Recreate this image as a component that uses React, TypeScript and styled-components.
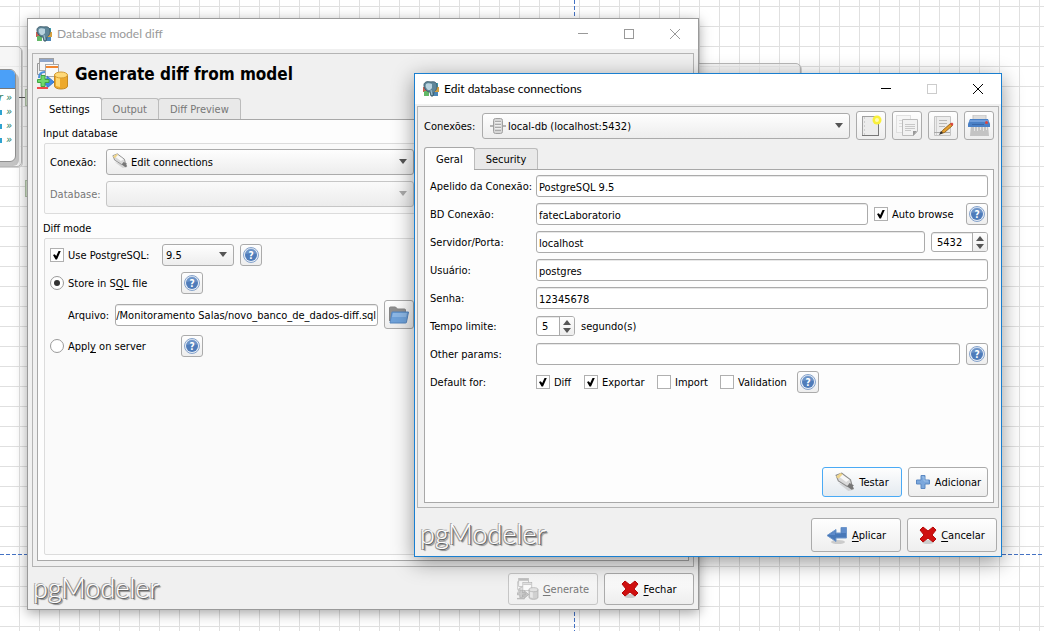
import React from "react";
import styled, { createGlobalStyle, css } from "styled-components";

const UI_FONT = '"DejaVu Sans Condensed", "DejaVu Sans", sans-serif';

const GlobalStyle = createGlobalStyle`
  *, *::before, *::after { box-sizing: border-box; }
  body {
    margin: 0;
    background: #fff;
    color: #000;
    font-family: ${UI_FONT};
    font-size: 11px;
    line-height: 16px;
  }
  button, input, select { font: inherit; color: inherit; margin: 0; }
  h1, h2 { margin: 0; font-weight: normal; font-size: inherit; }
  u { text-underline-offset: 2px; }
`;

/* ---------- model canvas ---------- */

const Canvas = styled.div`
  position: relative;
  min-height: 100vh;
  overflow: hidden;
  background-image: linear-gradient(to right, transparent 19px, #e0e0e0 19px),
    linear-gradient(to bottom, transparent 19px, #e0e0e0 19px);
  background-size: 20px 20px;
  background-position: 0 0, 0 7px;
`;

const PageBreak = styled.div<{ $vertical?: boolean }>`
  position: absolute;
  ${(p) =>
    p.$vertical
      ? css`
          top: 0; bottom: 0; left: 574px; width: 1px;
          background: repeating-linear-gradient(to bottom, #4472c4 0 4px, transparent 4px 6px);
        `
      : css`
          left: 0; right: 0; top: 554px; height: 1px;
          background: repeating-linear-gradient(to right, #4472c4 0 4px, transparent 4px 6px);
        `}
`;

const Schema = styled.div<{ $x: number; $y: number; $w: number; $h: number }>`
  position: absolute;
  left: ${(p) => p.$x}px;
  top: ${(p) => p.$y}px;
  width: ${(p) => p.$w}px;
  height: ${(p) => p.$h}px;
  border: 1px solid #b8b8b8;
  border-radius: 5px;
  background: rgba(240, 240, 240, 0.6);
  box-shadow: 1px 1px 0 #d4d4d4;
`;

const ModelTable = styled.div`
  position: absolute;
  left: -80px;
  top: 69px;
  width: 96px;
  height: 93px;
  border: 1px solid #8f8f8f;
  border-radius: 6px;
  background: #fff;
  box-shadow: 3px 4px 0 #c4c4c4;
  overflow: hidden;
`;

const ModelHeader = styled.div`
  height: 19px;
  margin-bottom: 2px;
  background: #4ba0f8;
  border-bottom: 1px solid #777;
`;

const ModelColumn = styled.div`
  display: flex;
  align-items: center;
  justify-content: flex-end;
  gap: 4px;
  height: 14px;
  padding-right: 3px;
  font: italic 11px/14px ${UI_FONT};
  color: #1c7a5e;
`;

const ColumnType = styled.span`
  width: 2px;
  height: 5px;
  background: #2fa3d0;
`;

const Link = styled.div`
  position: absolute;
  left: 16px;
  top: 97px;
  width: 11px;
  height: 1px;
  background: #555;
`;

const LinkTag = styled.div<{ $y: number }>`
  position: absolute;
  left: 25px;
  top: ${(p) => p.$y}px;
  width: 8px;
  height: 17px;
  border: 1px solid #b4c6ab;
  background: #d9ead0;
`;

/* ---------- windows ---------- */

const Win = styled.section<{ $active?: boolean }>`
  position: absolute;
  display: flex;
  flex-direction: column;
  background: #f0f0f0;
  ${(p) =>
    p.$active
      ? css`
          left: 414px; right: 42px; top: 73px; bottom: 74px;
          border: 1px solid #1a7fd0;
          box-shadow: 0 5px 20px rgba(0, 0, 0, 0.42);
        `
      : css`
          left: 27px; right: 345px; top: 18px; bottom: 21px;
          border: 1px solid #9a9a9a;
          box-shadow: 0 3px 12px rgba(0, 0, 0, 0.36);
        `}
`;

const TitleBar = styled.header<{ $active?: boolean }>`
  display: flex;
  align-items: center;
  flex: none;
  height: 30px;
  padding-left: 8px;
  gap: 5px;
  background: #fff;
  color: ${(p) => (p.$active ? "#000" : "#999")};
  font: 12px/16px Lato, "Open Sans", sans-serif;
`;

const Title = styled.h1`
  flex: 1;
`;

const CaptionButton = styled.button`
  display: flex;
  align-items: center;
  justify-content: center;
  width: 46px;
  height: 30px;
  padding: 0;
  border: 0;
  background: none;
`;

const Captions = styled.div`
  display: flex;
`;

const Frame = styled.div<{ $active?: boolean }>`
  display: flex;
  flex-direction: column;
  flex: 1;
  min-height: 0;
  border: 1px solid #b4b4b4;
  margin: ${(p) => (p.$active ? "2px 2px 0" : "4px 4px 0")};
  padding: ${(p) => (p.$active ? "4px 4px 4px 6px" : "4px 4px 5px")};
`;

const Heading = styled.div`
  display: flex;
  align-items: center;
  gap: 6px;
  height: 32px;
  margin-bottom: 7px;
`;

const HeadingText = styled.h2`
  font: bold 17px/24px ${UI_FONT};
`;

const Toolbar = styled.div`
  display: flex;
  align-items: center;
  gap: 6px;
  margin-bottom: 7px;
`;

const Tabs = styled.div`
  display: flex;
  align-items: flex-end;
  height: 22px;
  position: relative;
  z-index: 1;
`;

const Tab = styled.button<{ $on?: boolean; $muted?: boolean }>`
  height: ${(p) => (p.$on ? 23 : 21)}px;
  margin: 0 0 ${(p) => (p.$on ? -1 : 0)}px ${(p) => (p.$on ? 0 : -1)}px;
  padding: 2px 11px 0;
  border: 1px solid ${(p) => (p.$on ? "#a8a8a8" : "#bcbcbc")};
  border-bottom: 0;
  border-radius: 3px 3px 0 0;
  background: ${(p) => (p.$on ? "#fdfdfd" : "#e9e9e9")};
  color: ${(p) => (p.$muted ? "#777" : "#000")};
`;

const Pane = styled.div`
  display: flex;
  flex-direction: column;
  flex: 1;
  min-height: 0;
  padding: 5px;
  border: 1px solid #a8a8a8;
  background: #fdfdfd;
`;

const GroupTitle = styled.h2`
  line-height: 18px;
`;

const Group = styled.div<{ $grow?: boolean }>`
  display: flex;
  flex-direction: column;
  gap: 6px;
  margin: 0 0 ${(p) => (p.$grow ? 0 : 6)}px 1px;
  padding: 5px 268px 6px 5px;
  border: 1px solid #dcdcdc;
  border-radius: 2px;
  background: #fafafa;
  ${(p) => p.$grow && "flex: 1;"}
`;

const Row = styled.div<{ $indent?: boolean }>`
  display: flex;
  align-items: center;
  gap: 6px;
  min-height: 22px;
  padding-left: ${(p) => (p.$indent ? 18 : 0)}px;
`;

const Label = styled.label<{ $w?: number; $muted?: boolean }>`
  flex: none;
  width: ${(p) => (p.$w ? `${p.$w}px` : "auto")};
  padding-top: 2px;
  white-space: nowrap;
  color: ${(p) => (p.$muted ? "#777" : "inherit")};
`;

const Caption = styled.span`
  padding-top: 2px;
`;

const field = css`
  border: 1px solid #ababab;
  border-radius: 3px;
  box-shadow: inset 0 1px 0 #e8e8e8;
  background: #fff;
`;

const TextField = styled.input<{ $tight?: boolean }>`
  ${field}
  flex: 1;
  min-width: 0;
  height: 22px;
  padding: 2px ${(p) => (p.$tight ? 0 : 2)}px 0;
`;

const ComboBox = styled.div<{ $w?: number }>`
  position: relative;
  display: flex;
  flex: ${(p) => (p.$w ? "none" : "1")};
  width: ${(p) => (p.$w ? `${p.$w}px` : "auto")};
  min-width: 0;
`;

const ComboSelect = styled.select<{ $small?: boolean; $pad: number }>`
  appearance: none;
  width: 100%;
  height: ${(p) => (p.$small ? 22 : 26)}px;
  padding: 2px 24px 0 ${(p) => p.$pad}px;
  border: 1px solid #ababab;
  border-radius: 3px;
  background: linear-gradient(#fefefe, #ededed);
  &:disabled {
    opacity: 1;
    border-color: #c6c6c6;
    background: linear-gradient(#fafafa, #ececec);
  }
`;

const ComboIcon = styled.span`
  position: absolute;
  left: 6px;
  top: 4px;
  display: flex;
  pointer-events: none;
`;

const ComboArrow = styled.span<{ $muted?: boolean }>`
  position: absolute;
  right: 7px;
  top: 50%;
  margin-top: -3px;
  border: 4px solid transparent;
  border-top: 5px solid ${(p) => (p.$muted ? "#aaa" : "#555")};
  border-bottom: 0;
  pointer-events: none;
`;

const SpinBox = styled.div<{ $w: number }>`
  ${field}
  display: flex;
  width: ${(p) => p.$w}px;
  height: 20px;
  overflow: hidden;
`;

const SpinInput = styled.input`
  flex: 1;
  min-width: 0;
  padding: 2px 0 0 5px;
  border: 0;
  background: none;
`;

const SpinArrows = styled.div`
  display: flex;
  flex-direction: column;
  gap: 2px;
  width: 15px;
  padding: 2px 0;
  border-left: 1px solid #ababab;
  background: linear-gradient(#fefefe, #ededed);
`;

const SpinButton = styled.button`
  display: flex;
  align-items: center;
  justify-content: center;
  flex: 1;
  padding: 0;
  border: 0;
  background: none;
`;

const raised = css`
  display: inline-flex;
  align-items: center;
  justify-content: center;
  flex: none;
  padding: 0;
  border: 1px solid #ababab;
  border-radius: 3px;
  background: linear-gradient(#fefefe, #eeeeee);
`;

const ToolButton = styled.button<{ $size?: "small" }>`
  ${raised}
  width: ${(p) => (p.$size === "small" ? 22 : 30)}px;
  height: ${(p) => (p.$size === "small" ? 22 : 29)}px;
`;

const PushButton = styled.button<{ $w: number; $h: number; $focus?: boolean }>`
  ${raised}
  gap: 4px;
  width: ${(p) => p.$w}px;
  height: ${(p) => p.$h}px;
  ${(p) =>
    p.$focus &&
    css`
      border-color: #4aaaf5;
      background: linear-gradient(#fefefe, #e4eaf0);
    `}
  &:disabled {
    color: #777;
    border-color: #c6c6c6;
    background: linear-gradient(#f9f9f9, #efefef);
  }
`;

const Check = styled.label<{ $w?: number }>`
  display: inline-flex;
  align-items: center;
  flex: none;
  gap: 4px;
  width: ${(p) => (p.$w ? `${p.$w}px` : "auto")};
  white-space: nowrap;
`;

const CheckInput = styled.input`
  appearance: none;
  display: grid;
  place-items: center;
  width: 14px;
  height: 14px;
  border: 1px solid #b0b0b0;
  background: #fff;
  &[type="radio"] { border-radius: 50%; border-color: #9a9a9a; }
  &[type="radio"]:checked::before {
    content: "";
    width: 6px;
    height: 6px;
    border-radius: 50%;
    background: #333;
  }
  &[type="checkbox"]:checked::before {
    content: "";
    width: 8px;
    height: 9px;
    background: #000;
    clip-path: polygon(0 50%, 22% 42%, 40% 62%, 72% 0, 100% 0, 50% 100%, 32% 100%);
  }
`;

const Actions = styled.div`
  display: flex;
  justify-content: flex-end;
  gap: 6px;
  margin-top: auto;
`;

const Form = styled.div`
  display: flex;
  flex-direction: column;
  gap: 6px;
`;

const Footer = styled.footer<{ $active?: boolean }>`
  display: flex;
  align-items: center;
  gap: 6px;
  flex: none;
  padding: ${(p) => (p.$active ? "10px 4px 4px" : "6px 4px 4px")};
`;

const Logo = styled.span`
  flex: 1;
  padding: 0 0 3px 1px;
  font: 300 27px/28px Lato, sans-serif;
  color: #fff;
  text-shadow: 1px 1px 0 #666, 2px 2px 1px #888, -1px -1px 0 #aaa, -1px 1px 0 #999;
`;

/* ---------- icons ---------- */

const AppIcon = () => (
  <svg width="16" height="16" viewBox="0 0 16 16">
    <rect x="0" y="6" width="4" height="5" fill="#c95f52" />
    <rect x="1" y="10" width="5" height="5" fill="#62b867" />
    <rect x="10" y="2" width="5" height="5" fill="#42a5b5" />
    <rect x="12" y="6" width="4" height="5" fill="#d7a13e" />
    <rect x="10" y="11" width="5" height="4" fill="#4c86b5" />
    <path d="M1 4C1 1 4 0 8 1c4-1 6 1 6 4 0 4-2 5-3 6l-1 4H8l-1-4C4 11 1 8 1 4z" fill="#5f8699" stroke="#41606f" />
    <path d="M3 3c1-1 4-1 6 0v4c-1 2-4 3-5 1-1-1-2-3-1-5z" fill="#b9d3df" />
    <path d="M8 9l1 5" fill="none" stroke="#9fc0cf" />
  </svg>
);

const DiffIcon = ({ size = 32, gray }: { size?: number; gray?: boolean }) => {
  const c = (a: string, b: string) => (gray ? b : a);
  return (
    <svg width={size} height={size} viewBox="0 0 32 32">
      <path d="M3 5.500H.5v11H5" fill="none" stroke={c("#999", "#bbb")} />
      <rect x="2.500" y=".5" width="14" height="12" fill="#f6f6f6" stroke={c("#a0a0a0", "#b4b4b4")} />
      <rect x="3" y="1" width="13" height="3" fill={c("#8fa5c9", "#c0c0c0")} />
      <rect x="8.500" y="6.500" width="13" height="12" fill="#fafafa" stroke={c("#aaa", "#b4b4b4")} />
      <rect x="9" y="8" width="12" height="2" fill={c("#f2862e", "#c8c8c8")} />
      <path d="M2 20c0-5 3-6 6-6" fill="none" stroke={c("#4a90dc", "#c4c4c4")} strokeWidth="2" />
      <path d="M10 18l7 6-7 6v-3H6v-6h4z" fill={c("#3f8ae6", "#c4c4c4")} stroke={c("#3a78c8", "#aaa")} />
      <path d="M4 17.500h4v4h4v3H8v4H4v-4H.5v-3H4z" fill={c("#6fd96c", "#ccc")} stroke={c("#3fa443", "#aaa")} />
      <rect x="0" y="29" width="11" height="2" fill={c("#ef4a4a", "#bbb")} />
      <path d="M17.500 17v11c0 4 13 4 13 0V17z" fill={c("#eda92c", "#d0d0d0")} stroke={c("#c48a24", "#a8a8a8")} />
      <path d="M19 19h4v10l-4-1z" fill={c("#ffd770", "#e8e8e8")} />
      <ellipse cx="24" cy="17" rx="6.500" ry="3" fill={c("#ffd977", "#e2e2e2")} stroke={c("#d49c34", "#aaa")} />
    </svg>
  );
};

const PlugIcon = ({ size = 16 }: { size?: number }) => (
  <svg width={size} height={size} viewBox="0 0 18 18">
    <path d="M3 10l9 7 5-1v-2" fill="#aaa" opacity=".4" />
    <path d="M1 3l5-2 8 6 1 4-4 2-8-5z" fill="#d9d9d9" stroke="#8b8b8b" />
    <path d="M2 3l4-1 7 5-3 2z" fill="#f8f8f8" />
    <path d="M1 4l4-3 2 1-4 4z" fill="#efd58b" />
    <path d="M13 10l4 2-1 1 1 2-2 1-4-3z" fill="#777" />
  </svg>
);

const ServerIcon = () => (
  <svg width="18" height="18" viewBox="0 0 18 18">
    <path d="M2 9h16" stroke="#b4b4b4" strokeWidth="2" />
    <rect x="5.500" y="1.500" width="9" height="15" rx="2" fill="#d6d6d6" stroke="#a0a0a0" />
    <path d="M7 4.500h6M7 7.500h6M7 10.500h6M7 13.500h6" stroke="#aaa" />
    <path d="M7 5.500h6M7 8.500h6M7 11.500h6" stroke="#eee" />
  </svg>
);

const HelpIcon = () => (
  <svg width="16" height="16" viewBox="0 0 16 16">
    <circle cx="8" cy="8" r="7.500" fill="#e8eef6" stroke="#86a3cb" />
    <circle cx="8" cy="8" r="6" fill="#4f7cba" />
    <path d="M2.500 7a5.500 5.500 0 0 1 11 0c-3-1-7-1-11 0z" fill="#7fa3d2" opacity=".6" />
    <text x="8" y="12" textAnchor="middle" fontSize="10" fontWeight="bold" fill="#fff">?</text>
  </svg>
);

const FolderIcon = () => (
  <svg width="22" height="20" viewBox="0 0 22 20">
    <path d="M1.500 16V3q0-1 1-1h5l2 2h7q1 0 1 1v4" fill="#909090" stroke="#858585" />
    <path d="M4 7h16.500l-2 10q0 1-1 1H2z" fill="#6fa2da" stroke="#5585be" />
    <path d="M5 8h14l-1 4H4z" fill="#8db8e6" />
  </svg>
);

const CrossIcon = () => (
  <svg width="18" height="18" viewBox="0 0 18 18">
    <ellipse cx="9" cy="16" rx="6" ry="2" fill="#ccc" />
    <path d="M4 1l5 4 5-4 3 3-4 5 4 4-3 3-5-4-5 4-3-3 4-4-4-5z" fill="#d01010" stroke="#b50808" strokeLinejoin="round" />
  </svg>
);

const EnterIcon = () => (
  <svg width="22" height="18" viewBox="0 0 22 18">
    <ellipse cx="12" cy="16" rx="7" ry="2" fill="#ccc" />
    <path d="M15 1.500h5.500V12H10v3.500L1 9.500l9-6V7h5z" fill="#4878b8" stroke="#6f97cb" />
    <path d="M16 2h4v5h-4zM3 9l6-4v4z" fill="#5f8ccb" />
  </svg>
);

const PlusIcon = () => (
  <svg width="16" height="16" viewBox="0 0 16 16">
    <path d="M6 1.500h4V6h4.500v4H10v4.500H6V10H1.500V6H6z" fill="#7ba7dc" stroke="#5c89c2" />
    <path d="M7 3h2v4h4" fill="none" stroke="#9cc0e8" />
  </svg>
);

const NewIcon = () => (
  <svg width="22" height="22" viewBox="0 0 22 22">
    <rect x="2.500" y="1.500" width="16" height="19" fill="#ececec" stroke="#a0a0a0" />
    <path d="M4.500 2v18" stroke="#cfcfcf" strokeDasharray="2 2" />
    <path d="M2 20.500h17M18.500 2v19" stroke="#777" />
    <circle cx="17" cy="5" r="4.500" fill="#f9f03a" />
    <circle cx="17" cy="5" r="2" fill="#fffbb0" />
  </svg>
);

const CopyIcon = () => (
  <svg width="22" height="22" viewBox="0 0 22 22">
    <rect x=".5" y=".5" width="14" height="17" fill="#f6f6f6" stroke="#e0e0e0" />
    <path d="M3 5.500h8M3 8.500h4M3 11.500h3" stroke="#ddd" />
    <path d="M6.500 4.500h15v12l-4 4h-11z" fill="#f2f2f2" stroke="#bcbcbc" />
    <path d="M9 9.500h10M9 11.500h10M9 13.500h10M9 15.500h6" stroke="#c8c8c8" />
    <path d="M21 16h-4v5z" fill="#999" />
  </svg>
);

const EditIcon = () => (
  <svg width="22" height="22" viewBox="0 0 22 22">
    <path d="M2.500 1.500h16v19h-16z" fill="#ececec" stroke="#c4c4c4" />
    <path d="M4.500 2v18" stroke="#d0d0d0" />
    <path d="M7 5.500h8M7 8.500h8M7 11.500h6" stroke="#b8b8b8" />
    <path d="M2 17.500h16" stroke="#aaa" />
    <path d="M8.500 18.500l2-3 8-7 2 2-8 7z" fill="#e5a030" stroke="#9a6820" />
    <path d="M18 9l2-1.500 1.500 1.500-1.500 2z" fill="#d9413c" />
    <path d="M7 20l2-4 2 2z" fill="#333" />
  </svg>
);

const ShredIcon = () => (
  <svg width="22" height="22" viewBox="0 0 22 22">
    <path d="M5 0h13v6H5z" fill="#ddd" stroke="#c4c4c4" />
    <path d="M3 10h17l1 11H2z" fill="#c4c4c4" />
    <path d="M6.500 11v5M9.500 11v5M12.500 11v4M15.500 11v5M18.500 11v4" stroke="#e6e6e6" />
    <path d="M2 4h18l2 5v3H0V9z" fill="#4a80c6" />
    <path d="M2 5h18l1 2H1z" fill="#6f9ddb" />
    <path d="M4 9.500h12" stroke="#3a68aa" />
    <circle cx="18.500" cy="7.500" r="1.500" fill="#e0443c" />
  </svg>
);

const MinimizeIcon = () => (
  <svg width="10" height="10" viewBox="0 0 10 10"><path d="M0 4.500h10" stroke="currentColor" /></svg>
);
const MaximizeIcon = ({ color = "currentColor" }: { color?: string }) => (
  <svg width="10" height="10" viewBox="0 0 10 10"><rect x=".5" y=".5" width="9" height="9" fill="none" stroke={color} /></svg>
);
const CloseIcon = () => (
  <svg width="10" height="10" viewBox="0 0 10 10"><path d="M0 0l10 10M10 0L0 10" stroke="currentColor" /></svg>
);

/* ---------- shared pieces ---------- */

const WindowTitle = ({ text, active }: { text: string; active?: boolean }) => (
  <TitleBar $active={active}>
    <AppIcon />
    <Title>{text}</Title>
    <Captions>
      <CaptionButton aria-label="Minimize"><MinimizeIcon /></CaptionButton>
      <CaptionButton aria-label="Maximize" disabled={active}>
        <MaximizeIcon color={active ? "#ccc" : undefined} />
      </CaptionButton>
      <CaptionButton aria-label="Close"><CloseIcon /></CaptionButton>
    </Captions>
  </TitleBar>
);

type ComboProps = {
  id?: string;
  text: string;
  icon?: React.ReactNode;
  pad?: number;
  small?: boolean;
  width?: number;
  disabled?: boolean;
  label?: string;
};
const Combo = ({ id, text, icon, pad = 3, small, width, disabled, label }: ComboProps) => (
  <ComboBox $w={width}>
    <ComboSelect id={id} $small={small} $pad={pad} disabled={disabled} aria-label={label}>
      <option>{text}</option>
    </ComboSelect>
    {icon && <ComboIcon>{icon}</ComboIcon>}
    <ComboArrow $muted={disabled} />
  </ComboBox>
);

const Spin = ({ id, value, width, label }: { id?: string; value: string; width: number; label?: string }) => (
  <SpinBox $w={width}>
    <SpinInput id={id} defaultValue={value} aria-label={label} />
    <SpinArrows>
      <SpinButton aria-label="Increase"><svg width="8" height="5"><path d="M0 5l4-5 4 5z" fill="#555" /></svg></SpinButton>
      <SpinButton aria-label="Decrease"><svg width="8" height="5"><path d="M0 0l4 5 4-5z" fill="#555" /></svg></SpinButton>
    </SpinArrows>
  </SpinBox>
);

const Help = () => (
  <ToolButton $size="small" aria-label="Help"><HelpIcon /></ToolButton>
);

type TickProps = { text: React.ReactNode; checked?: boolean; radio?: boolean; width?: number };
const Tick = ({ text, checked, radio, width }: TickProps) => (
  <Check $w={width}>
    <CheckInput type={radio ? "radio" : "checkbox"} name={radio ? "output" : undefined} defaultChecked={checked} />
    <Caption>{text}</Caption>
  </Check>
);

const LABEL = 100;

const DiffWindow = () => (
  <Win>
    <WindowTitle text="Database model diff" />
    <Frame>
      <Heading>
        <DiffIcon />
        <HeadingText>Generate diff from model</HeadingText>
      </Heading>
      <Tabs role="tablist">
        <Tab $on role="tab">Settings</Tab>
        <Tab $muted role="tab">Output</Tab>
        <Tab $muted role="tab">Diff Preview</Tab>
      </Tabs>
      <Pane>
        <GroupTitle>Input database</GroupTitle>
        <Group>
          <Row>
            <Label $w={50} htmlFor="conn">Conexão:</Label>
            <Combo id="conn" text="Edit connections" icon={<PlugIcon />} pad={24} />
          </Row>
          <Row>
            <Label $w={50} $muted htmlFor="db">Database:</Label>
            <Combo id="db" text="" disabled />
          </Row>
        </Group>
        <GroupTitle>Diff mode</GroupTitle>
        <Group $grow>
          <Row>
            <Tick text="Use PostgreSQL:" checked width={106} />
            <Combo text="9.5" small width={72} label="PostgreSQL version" />
            <Help />
          </Row>
          <Row>
            <Tick radio checked width={125} text={<>Store in S<u>Q</u>L file</>} />
            <Help />
          </Row>
          <Row $indent>
            <Label htmlFor="file">Arquivo:</Label>
            <TextField $tight id="file" defaultValue="/Monitoramento Salas/novo_banco_de_dados-diff.sql" />
            <ToolButton aria-label="Browse"><FolderIcon /></ToolButton>
          </Row>
          <Row>
            <Tick radio width={125} text={<>Appl<u>y</u> on server</>} />
            <Help />
          </Row>
        </Group>
      </Pane>
    </Frame>
    <Footer>
      <Logo>pgModeler</Logo>
      <PushButton $w={90} $h={32} disabled><DiffIcon size={22} gray /><Caption><u>G</u>enerate</Caption></PushButton>
      <PushButton $w={90} $h={32}><CrossIcon /><Caption><u>F</u>echar</Caption></PushButton>
    </Footer>
  </Win>
);

const ConnectionsWindow = () => (
  <Win $active>
    <WindowTitle text="Edit database connections" active />
    <Frame $active>
      <Toolbar>
        <Label $w={52} htmlFor="conns">Conexões:</Label>
        <Combo id="conns" text="local-db (localhost:5432)" icon={<ServerIcon />} pad={25} />
        <ToolButton aria-label="New"><NewIcon /></ToolButton>
        <ToolButton aria-label="Duplicate"><CopyIcon /></ToolButton>
        <ToolButton aria-label="Edit"><EditIcon /></ToolButton>
        <ToolButton aria-label="Remove"><ShredIcon /></ToolButton>
      </Toolbar>
      <Tabs role="tablist">
        <Tab $on role="tab">Geral</Tab>
        <Tab role="tab">Security</Tab>
      </Tabs>
      <Pane>
        <Form>
          <Row>
            <Label $w={LABEL} htmlFor="alias">Apelido da Conexão:</Label>
            <TextField id="alias" defaultValue="PostgreSQL 9.5" />
          </Row>
          <Row>
            <Label $w={LABEL} htmlFor="dbname">BD Conexão:</Label>
            <TextField id="dbname" defaultValue="fatecLaboratorio" />
            <Tick text="Auto browse" checked width={86} />
            <Help />
          </Row>
          <Row>
            <Label $w={LABEL} htmlFor="host">Servidor/Porta:</Label>
            <TextField id="host" defaultValue="localhost" />
            <Spin value="5432" width={57} label="Porta" />
          </Row>
          <Row>
            <Label $w={LABEL} htmlFor="user">Usuário:</Label>
            <TextField id="user" defaultValue="postgres" />
          </Row>
          <Row>
            <Label $w={LABEL} htmlFor="pass">Senha:</Label>
            <TextField id="pass" defaultValue="12345678" />
          </Row>
          <Row>
            <Label $w={LABEL} htmlFor="timeout">Tempo limite:</Label>
            <Spin id="timeout" value="5" width={39} />
            <Caption>segundo(s)</Caption>
          </Row>
          <Row>
            <Label $w={LABEL} htmlFor="params">Other params:</Label>
            <TextField id="params" />
            <Help />
          </Row>
          <Row>
            <Label as="span" $w={LABEL}>Default for:</Label>
            <Tick text="Diff" checked width={42} />
            <Tick text="Exportar" checked width={67} />
            <Tick text="Import" width={57} />
            <Tick text="Validation" width={71} />
            <Help />
          </Row>
        </Form>
        <Actions>
          <PushButton $w={80} $h={30} $focus><PlugIcon size={20} /><Caption>Testar</Caption></PushButton>
          <PushButton $w={80} $h={30}><PlusIcon /><Caption>Adicionar</Caption></PushButton>
        </Actions>
      </Pane>
    </Frame>
    <Footer $active>
      <Logo>pgModeler</Logo>
      <PushButton $w={90} $h={34}><EnterIcon /><Caption><u>A</u>plicar</Caption></PushButton>
      <PushButton $w={90} $h={34}><CrossIcon /><Caption><u>C</u>ancelar</Caption></PushButton>
    </Footer>
  </Win>
);

export default function App() {
  return (
    <>
      <GlobalStyle />
      <Canvas>
        <PageBreak $vertical />
        <PageBreak />
        <Schema $x={-80} $y={46} $w={102} $h={121} />
        <Schema $x={640} $y={63} $w={161} $h={60} />
        <Link />
        <LinkTag $y={89} />
        <LinkTag $y={180} />
        <ModelTable>
          <ModelHeader />
          <ModelColumn>r »</ModelColumn>
          <ModelColumn><ColumnType />»</ModelColumn>
          <ModelColumn><ColumnType />»</ModelColumn>
          <ModelColumn><ColumnType />»</ModelColumn>
        </ModelTable>
        <DiffWindow />
        <ConnectionsWindow />
      </Canvas>
    </>
  );
}
